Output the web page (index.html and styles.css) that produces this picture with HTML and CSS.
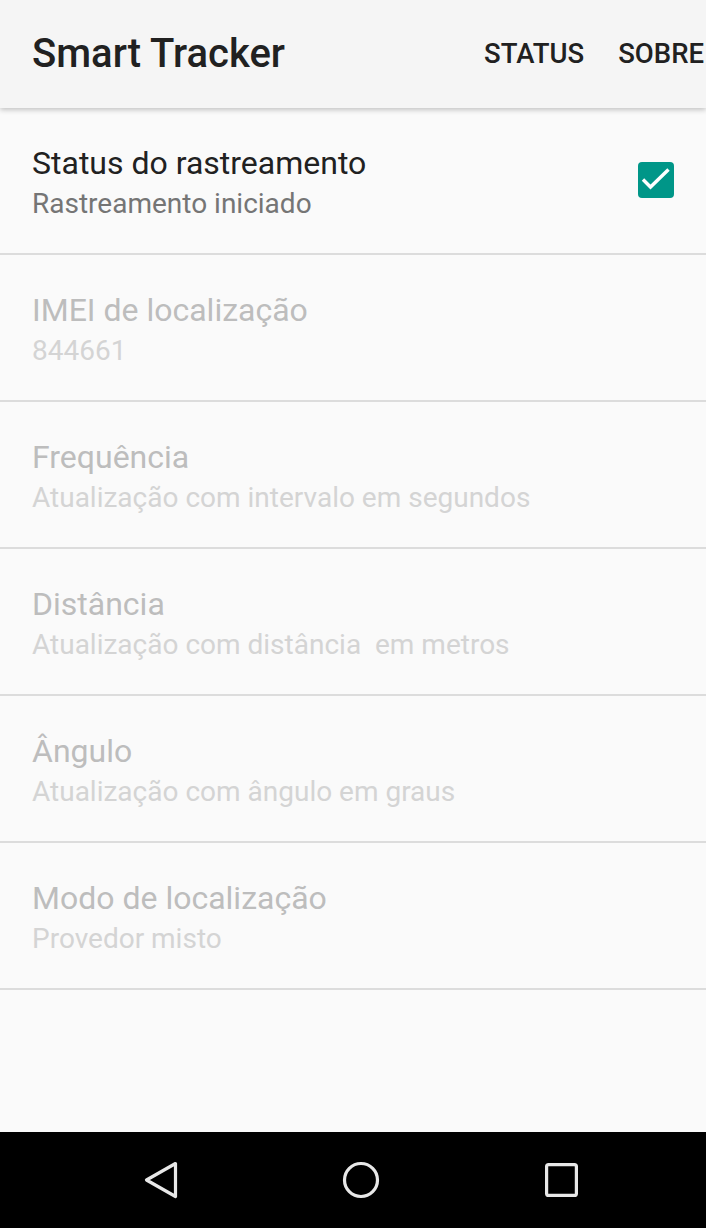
FILE: index.html
```html
<!DOCTYPE html>
<html lang="pt">
<head>
<meta charset="utf-8">
<title>Smart Tracker</title>
<link rel="stylesheet" href="styles.css">
</head>
<body>
<div class="screen">
  <header class="appbar">
    <h1 class="appbar-title">Smart Tracker</h1>
    <nav class="appbar-actions">
      <span class="action">STATUS</span>
      <span class="action">SOBRE</span>
    </nav>
  </header>
  <main class="prefs">
    <div class="pref">
      <div class="pref-text">
        <div class="pref-title">Status do rastreamento</div>
        <div class="pref-summary">Rastreamento iniciado</div>
      </div>
      <div class="checkbox">
        <svg viewBox="0 0 36 36" width="36" height="36"><path d="M5 17.5l7.5 7.5L30.5 7.5" fill="none" stroke="#fff" stroke-width="3.4"/></svg>
      </div>
    </div>
    <div class="pref disabled">
      <div class="pref-text">
        <div class="pref-title">IMEI de localização</div>
        <div class="pref-summary">844661</div>
      </div>
    </div>
    <div class="pref disabled">
      <div class="pref-text">
        <div class="pref-title">Frequência</div>
        <div class="pref-summary">Atualização com intervalo em segundos</div>
      </div>
    </div>
    <div class="pref disabled">
      <div class="pref-text">
        <div class="pref-title">Distância</div>
        <div class="pref-summary">Atualização com distância&nbsp; em metros</div>
      </div>
    </div>
    <div class="pref disabled">
      <div class="pref-text">
        <div class="pref-title">Ângulo</div>
        <div class="pref-summary">Atualização com ângulo em graus</div>
      </div>
    </div>
    <div class="pref disabled">
      <div class="pref-text">
        <div class="pref-title">Modo de localização</div>
        <div class="pref-summary">Provedor misto</div>
      </div>
    </div>
  </main>
  <footer class="navbar">
    <svg class="nav-icon" viewBox="0 0 40 40" width="40" height="40"><path d="M34.5 3.5 L5.5 20 L34.5 36.5 Z" fill="none" stroke="#e8e8e8" stroke-width="3.2" stroke-linejoin="round"/></svg>
    <svg class="nav-icon" viewBox="0 0 40 40" width="40" height="40"><circle cx="20" cy="20" r="16.5" fill="none" stroke="#e8e8e8" stroke-width="3.2"/></svg>
    <svg class="nav-icon" viewBox="0 0 40 40" width="40" height="40"><rect x="5.6" y="4.6" width="29.8" height="30.8" rx="2" fill="none" stroke="#e8e8e8" stroke-width="3.2"/></svg>
  </footer>
</div>
</body>
</html>
```
FILE: styles.css
```css
* { box-sizing: border-box; }
html, body {
  margin: 0;
  padding: 0;
  background: #fafafa;
  font-family: Roboto, "Noto Sans", sans-serif;
}
.screen {
  width: 706px;
  height: 1228px;
  display: flex;
  flex-direction: column;
  overflow: hidden;
  background: #fafafa;
}
.appbar {
  height: 108px;
  flex: 0 0 108px;
  background: #f5f5f5;
  display: flex;
  align-items: center;
  padding-left: 32px;
  padding-right: 2px;
  box-shadow: 0 2px 5px rgba(0,0,0,0.22);
  position: relative;
  z-index: 1;
}
.appbar-title {
  margin: 0;
  font-size: 40px;
  font-weight: 500;
  color: #212121;
  flex: 1 1 auto;
  white-space: nowrap;
  padding-bottom: 2px;
}
.appbar-actions {
  display: flex;
  gap: 34px;
  flex: 0 0 auto;
  padding-bottom: 2px;
}
.action {
  font-size: 27.5px;
  font-weight: 500;
  color: #212121;
  white-space: nowrap;
}
.prefs {
  flex: 1 1 auto;
}
.pref {
  height: 147px;
  border-bottom: 2px solid #dcdcdc;
  display: flex;
  align-items: center;
  padding: 0 32px;
}
.pref-text {
  flex: 1 1 auto;
  padding-top: 6px;
}
.pref-title {
  font-size: 32px;
  line-height: 40px;
  color: #212121;
}
.pref-summary {
  font-size: 28px;
  line-height: 42px;
  color: #757575;
}
.disabled .pref-title { color: #bdbdbd; }
.disabled .pref-summary { color: #d4d4d4; }
.checkbox {
  width: 36px;
  height: 36px;
  border-radius: 4px;
  background: #009688;
  margin-bottom: 2px;
}
.checkbox svg { display: block; }
.navbar {
  flex: 0 0 96px;
  height: 96px;
  background: #000;
  display: flex;
  align-items: center;
  padding-left: 141px;
  gap: 160px;
}
.nav-icon { display: block; flex: 0 0 40px; }
```
